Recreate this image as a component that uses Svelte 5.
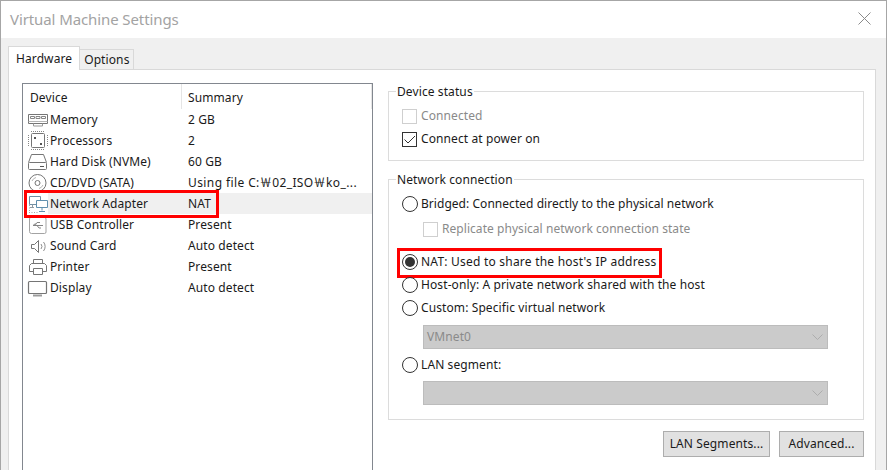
<script>
  const devices = [
    { id: "memory", name: "Memory", summary: "2 GB" },
    { id: "cpu", name: "Processors", summary: "2" },
    { id: "disk", name: "Hard Disk (NVMe)", summary: "60 GB" },
    { id: "cd", name: "CD/DVD (SATA)", summary: "Using file C:￦02_ISO￦ko_...", wide: true },
    { id: "net", name: "Network Adapter", summary: "NAT", selected: true },
    { id: "usb", name: "USB Controller", summary: "Present" },
    { id: "sound", name: "Sound Card", summary: "Auto detect" },
    { id: "printer", name: "Printer", summary: "Present" },
    { id: "display", name: "Display", summary: "Auto detect" },
  ];
</script>

{#snippet icon(id)}
  <svg class="icon" width="22" height="22" viewBox="0 0 22 22" fill="none" stroke="#757575" aria-hidden="true">
    {#if id === "memory"}
      <path d="M1.500 5.500h19v9h-19z" />
      <path d="M3.500 7.500h4v2h-4zM9 7.500h4v2h-4zM14.500 7.500h4v2h-4z" stroke="#858585" />
      <path d="M1.500 12.500h19" stroke="#b5b5b5" />
      <path d="M6.500 14.500v2.500h9v-2.500" stroke="#999" />
    {:else if id === "cpu"}
      <rect x="4.500" y="3.500" width="13" height="14" rx="1" />
      <path d="M4 1.500h14M4 19.500h14M1.500 5v12M20.500 5v12" stroke="#858585" stroke-dasharray="1 1" />
      <rect x="7" y="7" width="2" height="2" fill="#555" stroke="none" />
      <rect x="13" y="13" width="2" height="2" fill="#555" stroke="none" />
    {:else if id === "disk"}
      <path d="M1.500 11.500l3-8h12l3 8" />
      <rect x="1.500" y="11.500" width="18" height="7" rx="1" />
      <path d="M13 15.500h4" stroke="#555" />
    {:else if id === "cd"}
      <circle cx="10.500" cy="11" r="8.500" />
      <circle cx="10.500" cy="11" r="2.500" />
      <path d="M5 9a6 6 0 0 1 4-3.500M16 13a6 6 0 0 1-4 3.500" stroke="#b5b5b5" />
    {:else if id === "net"}
      <path d="M2.500 3.500h11v8h-11z" stroke="#6f8ea3" />
      <rect x="9" y="7" width="12" height="8" fill="#fff" stroke="none" />
      <path d="M9.500 7.500h11v7h-11zM15 14.500v3M12 18.500h6" stroke="#5f8fae" />
      <path d="M5.500 11.500v3M3 14.500h4" stroke="#8f9aa3" />
      <path d="M2.500 12v7M2 19.500h9" stroke="#a8a8a8" stroke-dasharray="1 1.500" />
    {:else if id === "usb"}
      <path d="M4.500 3.500h13a1.500 1.500 0 0 1 1.500 1.500v13a1.500 1.500 0 0 1-1.500 1.500h-13a2 2 0 0 1-2-2v-12.500a2 2 0 0 1 2-2z" stroke="#a3a3a3" />
      <path d="M6 11.500h10M6 11.500l2.500-2M8 11.500l2-3h3M10 11.500l2 2.500h2" stroke="#858585" />
    {:else if id === "sound"}
      <path d="M4.500 9.500h3l4-4v12l-4-4h-3z" />
      <path d="M14 9a4 4 0 0 1 0 5M16.500 7a7 7 0 0 1 0 9" stroke="#8f8f8f" />
    {:else if id === "printer"}
      <path d="M6.500 7.500v-4h9v4" />
      <path d="M6.500 15.500h-4v-6l2-2h13l2 2v6h-4" />
      <path d="M6.500 12.500h9v6h-9z" />
    {:else if id === "display"}
      <rect x="1.500" y="4.500" width="18" height="12" rx="1" stroke-width="1.200" />
      <path d="M6 18.500h9" stroke="#9c9c9c" stroke-width="2" />
    {/if}
  </svg>
{/snippet}

<div class="window">
  <header class="titlebar">
    <h1>Virtual Machine Settings</h1>
    <svg class="close" width="13" height="13" viewBox="0 0 13 13" aria-hidden="true">
      <path d="M0.500 0.500l12 12M12.500 0.500l-12 12" stroke="#8a8a8a" fill="none" />
    </svg>
  </header>

  <div class="dialog">
    <div class="tabs">
      <div class="tab active">Hardware</div>
      <div class="tab">Options</div>
    </div>

    <div class="panel">
      <div class="list">
        <div class="list-head">
          <span class="col-device">Device</span>
          <span class="col-summary">Summary</span>
        </div>
        {#each devices as d}
          <div class="row" class:selected={d.selected}>
            <span class="col-device">
              {@render icon(d.id)}
              <span class="name">{d.name}</span>
            </span>
            <span class="col-summary" class:wide={d.wide}>{d.summary}</span>
          </div>
        {/each}
        <div class="mark mark-row"></div>
      </div>

      <div class="side">
        <fieldset class="status">
          <legend>Device status</legend>
          <label class="check disabled first"><span class="box"></span>Connected</label>
          <label class="check">
            <span class="box">
              <svg width="13" height="13" viewBox="0 0 13 13" aria-hidden="true"><path d="M1.500 6.500l3.500 3.500l7-7" stroke="#333" fill="none" /></svg>
            </span>Connect at power on
          </label>
        </fieldset>

        <fieldset class="network">
          <legend>Network connection</legend>
          <label class="radio bridged"><span class="dot"></span>Bridged: Connected directly to the physical network</label>
          <label class="check disabled sub"><span class="box"></span>Replicate physical network connection state</label>
          <label class="radio nat"><span class="dot on"></span>NAT: Used to share the host's IP address<span class="mark mark-nat"></span></label>
          <label class="radio host"><span class="dot"></span>Host-only: A private network shared with the host</label>
          <label class="radio custom"><span class="dot"></span>Custom: Specific virtual network</label>
          <div class="select">
            <span>VMnet0</span>
            <svg width="11" height="6" viewBox="0 0 11 6" aria-hidden="true"><path d="M0.500 0.500l5 5l5-5" stroke="#adadad" fill="none" /></svg>
          </div>
          <label class="radio segment"><span class="dot"></span>LAN segment:</label>
          <div class="select last">
            <span></span>
            <svg width="11" height="6" viewBox="0 0 11 6" aria-hidden="true"><path d="M0.500 0.500l5 5l5-5" stroke="#adadad" fill="none" /></svg>
          </div>
        </fieldset>

        <div class="actions">
          <button class="lan">LAN Segments...</button>
          <button class="adv">Advanced...</button>
        </div>
      </div>
    </div>
  </div>
</div>

<style>
  :global(body) {
    margin: 0;
    overflow: hidden;
  }

  .window {
    width: 887px;
    height: 470px;
    box-sizing: border-box;
    border: 1px solid #a6a6a6;
    border-bottom: 0;
    display: flex;
    flex-direction: column;
    overflow: hidden;
    background: #fff;
    color: #1a1a1a;
    font-family: "Noto Sans", "Noto Sans CJK KR", sans-serif;
    font-size: 12px;
    line-height: 16px;
    letter-spacing: 0.1px;
  }

  .titlebar {
    height: 37px;
    flex: none;
    box-sizing: border-box;
    display: flex;
    align-items: center;
    justify-content: space-between;
    padding: 0 15px 2px 9px;
  }

  h1 {
    margin: 0;
    font-size: 15px;
    font-weight: 400;
    color: #a3a3a3;
    letter-spacing: -0.1px;
  }

  .dialog {
    flex: 1;
    min-height: 0;
    background: #f0f0f0;
    padding: 8px 10px 0 7px;
    display: flex;
    flex-direction: column;
  }

  .tabs {
    display: flex;
    align-items: flex-end;
    height: 23px;
    flex: none;
  }

  .tab {
    height: 20px;
    padding: 0 4px;
    display: flex;
    align-items: center;
    box-sizing: border-box;
    border: 1px solid #d9d9d9;
    border-bottom: 0;
    border-left: 0;
    background: #f0f0f0;
  }

  .tab.active {
    height: 24px;
    margin-bottom: -1px;
    padding: 0 7px;
    background: #fff;
    border-left: 1px solid #d9d9d9;
    position: relative;
    z-index: 1;
  }

  .panel {
    flex: 1;
    min-height: 0;
    background: #fff;
    border: 1px solid #d9d9d9;
    border-bottom: 0;
    padding: 13px 11px 0 13px;
    display: flex;
    gap: 15px;
  }

  .list {
    width: 351px;
    flex: none;
    box-sizing: border-box;
    border: 1px solid #82878f;
    border-bottom: 0;
    position: relative;
    margin-bottom: -20px;
  }

  .list-head {
    height: 25px;
    display: flex;
  }

  .list-head span {
    line-height: 27px;
  }

  .list-head .col-device {
    padding-left: 7px;
  }

  .list-head .col-summary {
    border-left: 1px solid #e5e5e5;
    border-right: 1px solid #e5e5e5;
  }

  .col-device {
    width: 158px;
    flex: none;
    box-sizing: border-box;
    white-space: nowrap;
  }

  .col-summary {
    flex: 1;
    padding-left: 6px;
    white-space: nowrap;
  }

  .row {
    height: 21px;
    display: flex;
    align-items: center;
  }

  .row .col-device {
    display: flex;
    align-items: center;
    padding-left: 4px;
  }

  .row .col-summary {
    padding-left: 7px;
  }

  .col-summary.wide {
    letter-spacing: 0.4px;
  }

  .row.selected {
    background: linear-gradient(to right, #fff 25px, #f0f0f0 25px);
  }

  .icon {
    flex: none;
    margin-right: 1px;
    overflow: visible;
  }

  .mark {
    position: absolute;
    border: 3px solid #f00;
    box-sizing: border-box;
    pointer-events: none;
  }

  .mark-row {
    left: 1px;
    top: 106px;
    width: 195px;
    height: 28px;
  }

  .side {
    flex: 1;
    min-width: 0;
    display: flex;
    flex-direction: column;
    padding-top: 7px;
  }

  fieldset {
    margin: 0;
    padding: 0 0 0 13px;
    border: 1px solid #dcdcdc;
  }

  legend {
    padding: 2px 1px 0;
    margin-left: -6px;
    line-height: 16px;
  }

  .status {
    height: 79px;
    box-sizing: border-box;
    margin-top: -8px;
  }

  .network {
    height: 250px;
    box-sizing: border-box;
    margin-top: 9px;
  }

  label {
    display: flex;
    align-items: center;
    white-space: nowrap;
    position: relative;
  }

  .check,
  .radio {
    height: 16px;
    margin-top: 7px;
  }

  .check.first {
    margin-top: 8px;
  }

  .check.disabled {
    color: #8a8a8a;
  }

  .check.sub {
    margin: 9px 0 0 21px;
    letter-spacing: 0.05px;
  }

  .box {
    width: 15px;
    height: 15px;
    flex: none;
    box-sizing: border-box;
    border: 1px solid #333;
    margin-right: 4px;
    display: flex;
    align-items: center;
    justify-content: center;
    background: #fff;
  }

  .disabled .box {
    border-color: #cfcfcf;
  }

  .radio.bridged {
    margin-top: 8px;
    letter-spacing: 0.04px;
  }

  .radio.nat {
    margin-top: 17px;
    letter-spacing: 0.22px;
  }

  .radio.segment {
    margin-top: 8px;
  }

  .dot {
    width: 16px;
    height: 16px;
    flex: none;
    box-sizing: border-box;
    border: 1px solid #333;
    border-radius: 50%;
    margin-right: 3px;
    display: flex;
    align-items: center;
    justify-content: center;
  }

  .dot.on::after {
    content: "";
    width: 10px;
    height: 10px;
    border-radius: 50%;
    background: #333;
  }

  .mark-nat {
    left: -5px;
    top: -6px;
    width: 265px;
    height: 30px;
  }

  .select {
    margin: 9px 0 0 21px;
    width: 405px;
    height: 24px;
    box-sizing: border-box;
    background: #cbcbcb;
    border: 1px solid #bcbcbc;
    display: flex;
    align-items: center;
    justify-content: space-between;
    padding: 0 4px 0 3px;
    color: #8a8a8a;
  }

  .select.last {
    margin-top: 8px;
  }

  .actions {
    display: flex;
    justify-content: flex-end;
    gap: 9px;
    margin-top: 11px;
  }

  button {
    font: inherit;
    letter-spacing: inherit;
    color: inherit;
    height: 26px;
    padding: 0;
    background: #e1e1e1;
    border: 1px solid #adadad;
  }

  .lan {
    width: 107px;
  }

  .adv {
    width: 85px;
  }
</style>
